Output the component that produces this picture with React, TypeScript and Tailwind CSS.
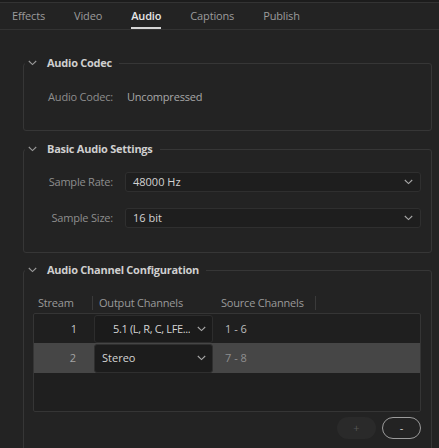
import type { ReactNode } from "react";

const tabs = ["Effects", "Video", "Audio", "Captions", "Publish"];

function Chevron({ className = "" }: { className?: string }) {
  return (
    <svg className={className} width="9" height="6" viewBox="0 0 9 6" fill="none">
      <path d="M0.8 1 L4.5 4.6 L8.2 1" stroke="currentColor" strokeWidth="1.1" />
    </svg>
  );
}

function Section({ title, children }: { title: string; children: ReactNode }) {
  return (
    <fieldset className="ml-[23px] mr-[7px] rounded-[3px] border border-[#363636]">
      <legend className="ml-[1px] px-[3px] pr-[7px]">
        <span className="flex h-[14px] items-center">
          <Chevron className="text-[#9a9a9a]" />
          <span className="ml-[10px] text-[11px] font-bold leading-[14px] tracking-[-0.25px] text-[#cfcfcf]">{title}</span>
        </span>
      </legend>
      {children}
    </fieldset>
  );
}

function SelectRow({ label, value }: { label: string; value: string }) {
  return (
    <div className="flex items-center pr-[10px]">
      <span className="w-[89px] text-right text-[11px] tracking-[-0.2px] text-[#8e8e8e]">{label}</span>
      <div className="ml-[12px] flex h-[20px] flex-1 items-center justify-between rounded-[3px] border border-[#2f2f2f] bg-[#1e1e1e] pl-[7px] pr-[7px]">
        <span className="text-[11px] text-[#d2d2d2]">{value}</span>
        <Chevron className="text-[#a8a8a8]" />
      </div>
    </div>
  );
}

export default function App() {
  return (
    <div className="h-[448px] w-[439px] overflow-hidden bg-[#232323] font-['Open_Sans',sans-serif] leading-[14px]">
      <div className="h-[2px] bg-[#1c1c1c]" />
      <div className="flex h-[28px] gap-[29px] border-y border-[#333333] pl-[12px]">
        {tabs.map((t) => (
          <div
            key={t}
            className={`flex items-center border-b-2 pt-[2px] text-[11px] tracking-[-0.15px] ${
              t === "Audio" ? "border-[#d6d6d6] font-semibold text-[#e6e6e6]" : "border-transparent text-[#9c9c9c]"
            }`}
          >
            {t}
          </div>
        ))}
      </div>

      <div className="h-[26px]" />
      <Section title="Audio Codec">
        <div className="flex items-center pb-[26px] pt-[20px]">
          <span className="w-[89px] text-right text-[11px] tracking-[-0.2px] text-[#8e8e8e]">Audio Codec:</span>
          <span className="ml-[14px] text-[11px] tracking-[-0.2px] text-[#a8a8a8]">Uncompressed</span>
        </div>
      </Section>

      <div className="h-[11px]" />
      <Section title="Basic Audio Settings">
        <div className="flex flex-col gap-[16px] pb-[24px] pt-[16px]">
          <SelectRow label="Sample Rate:" value="48000 Hz" />
          <SelectRow label="Sample Size:" value="16 bit" />
        </div>
      </Section>

      <div className="h-[10px]" />
      <Section title="Audio Channel Configuration">
        <div className="pb-[20px] pl-[9px] pr-[10px] pt-[16px]">
          <div className="flex h-[20px] items-center text-[11px] tracking-[-0.2px] text-[#9a9a9a]">
            <span className="w-[60px] border-r border-[#3a3a3a] pl-[5px]">Stream</span>
            <span className="w-[121px] pl-[6px]">Output Channels</span>
            <span className="w-[102px] border-r border-[#3a3a3a] pl-[7px]">Source Channels</span>
          </div>
          <div className="h-[99px] rounded-[2px] border border-[#353535] bg-[#1f1f1f]">
            <div className="flex h-[29px] items-center text-[11px]">
              <span className="w-[59px] pr-[16px] text-right text-[#c6c6c6]">1</span>
              <div className="ml-[1px] flex h-[28px] w-[119px] items-center justify-between rounded-[3px] border border-[#2d2d2d] bg-[#1b1b1b] pl-[18px] pr-[6px]">
                <span className="overflow-hidden whitespace-nowrap tracking-[-0.35px] text-[#d4d4d4]">5.1 (L, R, C, LFE...</span>
                <Chevron className="ml-[6px] shrink-0 text-[#a8a8a8]" />
              </div>
              <span className="pl-[12px] text-[#bcbcbc]">1 - 6</span>
            </div>
            <div className="flex h-[30px] items-center bg-[#464646] text-[11px]">
              <span className="w-[59px] pr-[17px] text-right text-[#a4a4a4]">2</span>
              <div className="ml-[1px] flex h-[29px] w-[119px] items-center justify-between rounded-[3px] border border-[#2f2f2f] bg-[#1c1c1c] pl-[7px] pr-[6px]">
                <span className="text-[#d4d4d4]">Stereo</span>
                <Chevron className="text-[#a8a8a8]" />
              </div>
              <span className="pl-[12px] text-[#8f8f8f]">7 - 8</span>
            </div>
          </div>
          <div className="mt-[5px] flex justify-end gap-[6px]">
            <button
              type="button"
              className="flex h-[22px] w-[39px] items-center justify-center rounded-full bg-[#2a2a2a] text-[11px] text-[#555555]"
            >
              +
            </button>
            <button
              type="button"
              className="flex h-[22px] w-[39px] items-center justify-center rounded-full border border-[#9c9c9c] text-[11px] text-[#cfcfcf]"
            >
              -
            </button>
          </div>
        </div>
      </Section>
    </div>
  );
}
